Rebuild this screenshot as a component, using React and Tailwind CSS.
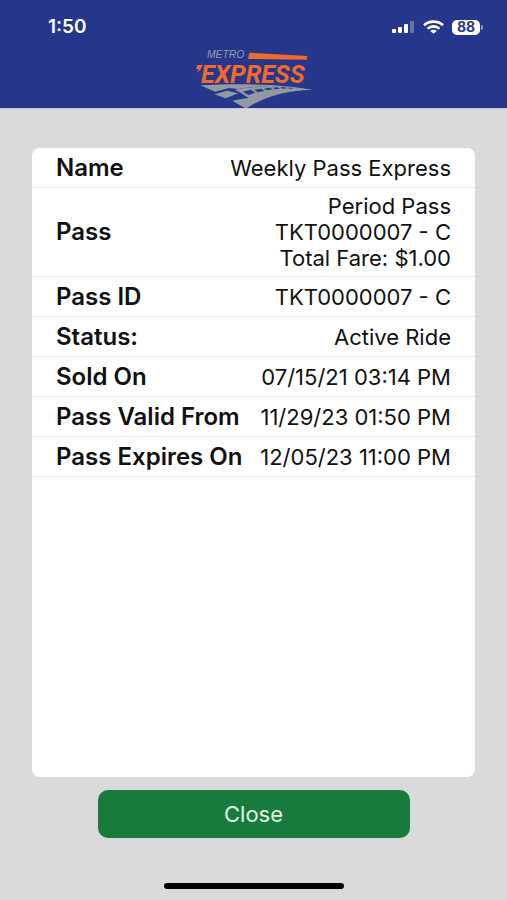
import React from "react";

const rows = [
  { label: "Name", value: ["Weekly Pass Express"] },
  { label: "Pass", value: ["Period Pass", "TKT0000007 - C", "Total Fare: $1.00"] },
  { label: "Pass ID", value: ["TKT0000007 - C"] },
  { label: "Status:", value: ["Active Ride"] },
  { label: "Sold On", value: ["07/15/21 03:14 PM"] },
  { label: "Pass Valid From", value: ["11/29/23 01:50 PM"] },
  { label: "Pass Expires On", value: ["12/05/23 11:00 PM"] },
];

function StatusBar() {
  return (
    <div className="flex h-[50px] items-center justify-between pt-1 pr-6 pl-12 text-white">
      <span className="text-[19px] font-semibold">1:50</span>
      <div className="flex items-center gap-2">
        <svg className="h-[13px] w-[23px]" viewBox="0 0 23 13" fill="currentColor" aria-label="Signal">
          <rect x="0" y="8" width="4" height="4" rx="1" />
          <rect x="6" y="6" width="4" height="6" rx="1" />
          <rect x="12" y="3" width="4" height="9" rx="1" />
          <rect x="18" y="0" width="4" height="12" rx="1" opacity="0.3" />
        </svg>
        <svg className="h-[14px] w-[21px]" viewBox="0 0 21 14" fill="none" stroke="currentColor" strokeWidth="2.6" aria-label="Wi-Fi">
          <path d="M1 5.2C6.2 0.4 14.8 0.4 20 5.2" />
          <path d="M4.6 8.6C8 5.6 13 5.6 16.4 8.6" />
          <path d="M7.2 11C9 9.4 12 9.4 13.8 11L10.5 13.8Z" fill="currentColor" stroke="none" />
        </svg>
        <div className="flex items-center gap-px">
          <span className="flex h-[15px] w-7 items-center justify-center rounded-[5px] bg-white text-sm font-bold text-[#26378b]">
            88
          </span>
          <span className="h-[5px] w-[2px] rounded-r-full bg-white/50" />
        </div>
      </div>
    </div>
  );
}

function Logo() {
  return (
    <svg className="mx-auto h-[58px] w-[118px]" viewBox="30 30 354 174" role="img" aria-label="Metro Express">
      <text x="66" y="55" fill="#949ba8" fontFamily="Liberation Sans, sans-serif" fontSize="31" fontStyle="italic">
        METRO
      </text>
      <path d="M193 38L367 48L366 59L189 57Z" fill="#f26a2b" />
      <path d="M37 75H53L47 88L37 98L40 87H33Z" fill="#f26a2b" />
      <text x="48" y="128" fill="#f26a2b" fontFamily="Roboto, sans-serif" fontSize="75" fontWeight="700" fontStyle="italic">
        EXPRESS
      </text>
      <g fill="#9299a3">
        <path d="M46 136C150 130 280 131 382 149L300 145C240 138 200 139 160 147L132 144L90 155Z" />
        <path d="M88 163L126 152L160 160L122 175Z" />
        <path d="M150 149C200 137 300 138 382 149C310 153 270 162 226 182C206 192 194 198 183 206L142 182L190 173L166 158Z" />
      </g>
      <g fill="#26378b">
        <path d="M174 155L197 149L211 158L190 165Z" />
        <path d="M208 149L228 146L239 152L218 157Z" />
        <path d="M236 146L254 143L263 148L246 151Z" />
        <path d="M262 143L278 142L285 146L270 148Z" />
        <path d="M286 142L300 142L306 145L292 146Z" />
        <path d="M308 143L320 143L325 145L313 146Z" />
      </g>
    </svg>
  );
}

function PassRow({ label, value }) {
  return (
    <div className="flex min-h-10 items-center justify-end border-b border-[#e6e6e6] px-6 py-[5px] leading-[26px]">
      <dt className="w-0 grow whitespace-nowrap text-2xl leading-[26px] font-semibold">{label}</dt>
      <dd className="text-right text-[22px]">
        {value.map((line) => (
          <div key={line}>{line}</div>
        ))}
      </dd>
    </div>
  );
}

export default function App() {
  return (
    <div className="flex min-h-screen flex-col bg-[#dadada] font-['Inter',sans-serif] text-[#111]">
      <header className="border-b border-[#c4c6d4] bg-[#26378b]">
        <StatusBar />
        <Logo />
      </header>
      <main className="flex grow flex-col px-8 pt-[39px]">
        <dl className="grow rounded-lg bg-white">
          {rows.map((row) => (
            <PassRow key={row.label} label={row.label} value={row.value} />
          ))}
        </dl>
        <button
          type="button"
          className="mx-auto mt-[13px] h-12 w-[312px] max-w-full rounded-[10px] bg-[#177b3e] text-[22px] text-[#e3f5e3]"
        >
          Close
        </button>
      </main>
      <div className="mx-auto mt-[45px] mb-[11px] h-[6px] w-[180px] rounded-full bg-black" />
    </div>
  );
}
